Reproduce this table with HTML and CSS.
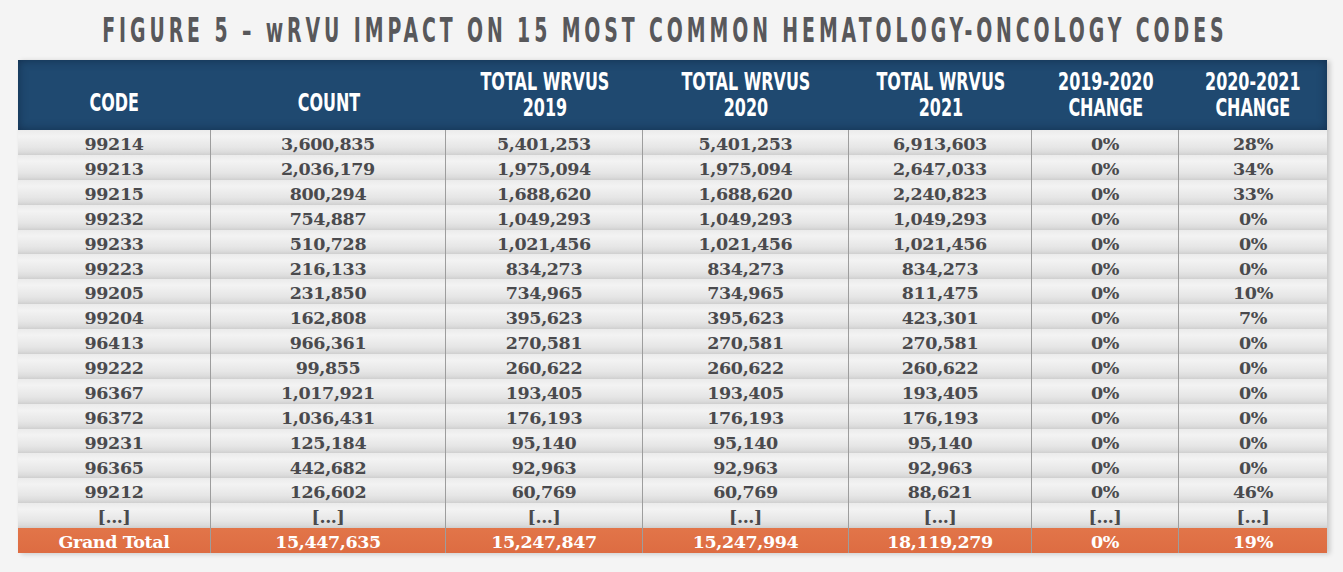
FILE: index.html
```html
<!DOCTYPE html>
<html>
<head>
<meta charset="utf-8">
<link rel="stylesheet" href="styles.css">
</head>
<body>
<div class="page">
  <h1 class="title"><span class="narrow">FIGURE 5 – wRVU IMPACT ON 15 MOST COMMON HEMATOLOGY-ONCOLOGY CODES</span></h1>
  <div class="table">
    <div class="row head">
      <div class="cell low"><span class="narrow">CODE</span></div>
      <div class="cell low"><span class="narrow">COUNT</span></div>
      <div class="cell"><span class="narrow">TOTAL WRVUS<br>2019</span></div>
      <div class="cell"><span class="narrow">TOTAL WRVUS<br>2020</span></div>
      <div class="cell"><span class="narrow">TOTAL WRVUS<br>2021</span></div>
      <div class="cell"><span class="narrow">2019-2020<br>CHANGE</span></div>
      <div class="cell"><span class="narrow">2020-2021<br>CHANGE</span></div>
    </div>
    <div class="row body"><div class="cell">99214</div><div class="cell">3,600,835</div><div class="cell">5,401,253</div><div class="cell">5,401,253</div><div class="cell">6,913,603</div><div class="cell">0%</div><div class="cell">28%</div></div>
    <div class="row body"><div class="cell">99213</div><div class="cell">2,036,179</div><div class="cell">1,975,094</div><div class="cell">1,975,094</div><div class="cell">2,647,033</div><div class="cell">0%</div><div class="cell">34%</div></div>
    <div class="row body"><div class="cell">99215</div><div class="cell">800,294</div><div class="cell">1,688,620</div><div class="cell">1,688,620</div><div class="cell">2,240,823</div><div class="cell">0%</div><div class="cell">33%</div></div>
    <div class="row body"><div class="cell">99232</div><div class="cell">754,887</div><div class="cell">1,049,293</div><div class="cell">1,049,293</div><div class="cell">1,049,293</div><div class="cell">0%</div><div class="cell">0%</div></div>
    <div class="row body"><div class="cell">99233</div><div class="cell">510,728</div><div class="cell">1,021,456</div><div class="cell">1,021,456</div><div class="cell">1,021,456</div><div class="cell">0%</div><div class="cell">0%</div></div>
    <div class="row body"><div class="cell">99223</div><div class="cell">216,133</div><div class="cell">834,273</div><div class="cell">834,273</div><div class="cell">834,273</div><div class="cell">0%</div><div class="cell">0%</div></div>
    <div class="row body"><div class="cell">99205</div><div class="cell">231,850</div><div class="cell">734,965</div><div class="cell">734,965</div><div class="cell">811,475</div><div class="cell">0%</div><div class="cell">10%</div></div>
    <div class="row body"><div class="cell">99204</div><div class="cell">162,808</div><div class="cell">395,623</div><div class="cell">395,623</div><div class="cell">423,301</div><div class="cell">0%</div><div class="cell">7%</div></div>
    <div class="row body"><div class="cell">96413</div><div class="cell">966,361</div><div class="cell">270,581</div><div class="cell">270,581</div><div class="cell">270,581</div><div class="cell">0%</div><div class="cell">0%</div></div>
    <div class="row body"><div class="cell">99222</div><div class="cell">99,855</div><div class="cell">260,622</div><div class="cell">260,622</div><div class="cell">260,622</div><div class="cell">0%</div><div class="cell">0%</div></div>
    <div class="row body"><div class="cell">96367</div><div class="cell">1,017,921</div><div class="cell">193,405</div><div class="cell">193,405</div><div class="cell">193,405</div><div class="cell">0%</div><div class="cell">0%</div></div>
    <div class="row body"><div class="cell">96372</div><div class="cell">1,036,431</div><div class="cell">176,193</div><div class="cell">176,193</div><div class="cell">176,193</div><div class="cell">0%</div><div class="cell">0%</div></div>
    <div class="row body"><div class="cell">99231</div><div class="cell">125,184</div><div class="cell">95,140</div><div class="cell">95,140</div><div class="cell">95,140</div><div class="cell">0%</div><div class="cell">0%</div></div>
    <div class="row body"><div class="cell">96365</div><div class="cell">442,682</div><div class="cell">92,963</div><div class="cell">92,963</div><div class="cell">92,963</div><div class="cell">0%</div><div class="cell">0%</div></div>
    <div class="row body"><div class="cell">99212</div><div class="cell">126,602</div><div class="cell">60,769</div><div class="cell">60,769</div><div class="cell">88,621</div><div class="cell">0%</div><div class="cell">46%</div></div>
    <div class="row body"><div class="cell">[...]</div><div class="cell">[...]</div><div class="cell">[...]</div><div class="cell">[...]</div><div class="cell">[...]</div><div class="cell">[...]</div><div class="cell">[...]</div></div>
    <div class="row total"><div class="cell">Grand Total</div><div class="cell">15,447,635</div><div class="cell">15,247,847</div><div class="cell">15,247,994</div><div class="cell">18,119,279</div><div class="cell">0%</div><div class="cell">19%</div></div>
  </div>
</div>
</body>
</html>
```
FILE: styles.css
```css
html, body {
  margin: 0;
  padding: 0;
  background: #f4f4f4;
}
.page {
  width: 1343px;
  height: 572px;
  padding: 0 16px 0 18px;
  box-sizing: border-box;
  display: flex;
  flex-direction: column;
}
.narrow {
  display: inline-block;
  white-space: nowrap;
}
.title {
  margin: 0;
  height: 60px;
  padding: 11px 15px 0 0;
  box-sizing: border-box;
  display: flex;
  justify-content: center;
  font-family: "DejaVu Sans", sans-serif;
  font-weight: 700;
  font-size: 34px;
  line-height: 38px;
  letter-spacing: 7px;
  color: #58585b;
  white-space: nowrap;
}
.title .narrow {
  transform: scaleX(0.556);
  transform-origin: center;
}
.table {
  width: 1309px;
  display: flex;
  flex-direction: column;
  box-shadow: 3px 1px 5px rgba(0,0,0,0.18);
}
.row {
  display: grid;
  grid-template-columns: 193px 235px 197px 206px 183px 147px 148px;
}
.head {
  height: 70px;
  background: #1f4970;
  box-shadow: inset 0 0 10px rgba(10,25,50,0.55);
  color: #fff;
  font-family: "DejaVu Sans", sans-serif;
  font-weight: 700;
  font-size: 24px;
  line-height: 26px;
}
.head .cell {
  display: flex;
  align-items: center;
  justify-content: center;
  text-align: center;
  padding-bottom: 1px;
}
.head .narrow {
  transform: scaleX(0.665);
  transform-origin: center;
}
.head .cell.low {
  padding-top: 16px;
  padding-bottom: 0;
}
.body, .total {
  font-family: "DejaVu Serif", serif;
  font-weight: 700;
  font-size: 17.5px;
  letter-spacing: -0.4px;
}
.body {
  height: 24.875px;
  background: linear-gradient(#ebebeb 0%, #f3f3f3 25%, #e6e6e6 70%, #dcdcdc 88%, #cfcfcf 100%);
  color: #4a4a4d;
}
.total {
  height: 25.3px;
  background: linear-gradient(#e27549, #dd6c42);
  color: #fff;
}
.body .cell, .total .cell {
  display: flex;
  align-items: center;
  justify-content: center;
  padding-top: 5px;
  box-sizing: border-box;
  border-right: 1px solid #9d9d9d;
  line-height: 1;
}
.body .cell:last-child, .total .cell:last-child {
  border-right: none;
}
```
